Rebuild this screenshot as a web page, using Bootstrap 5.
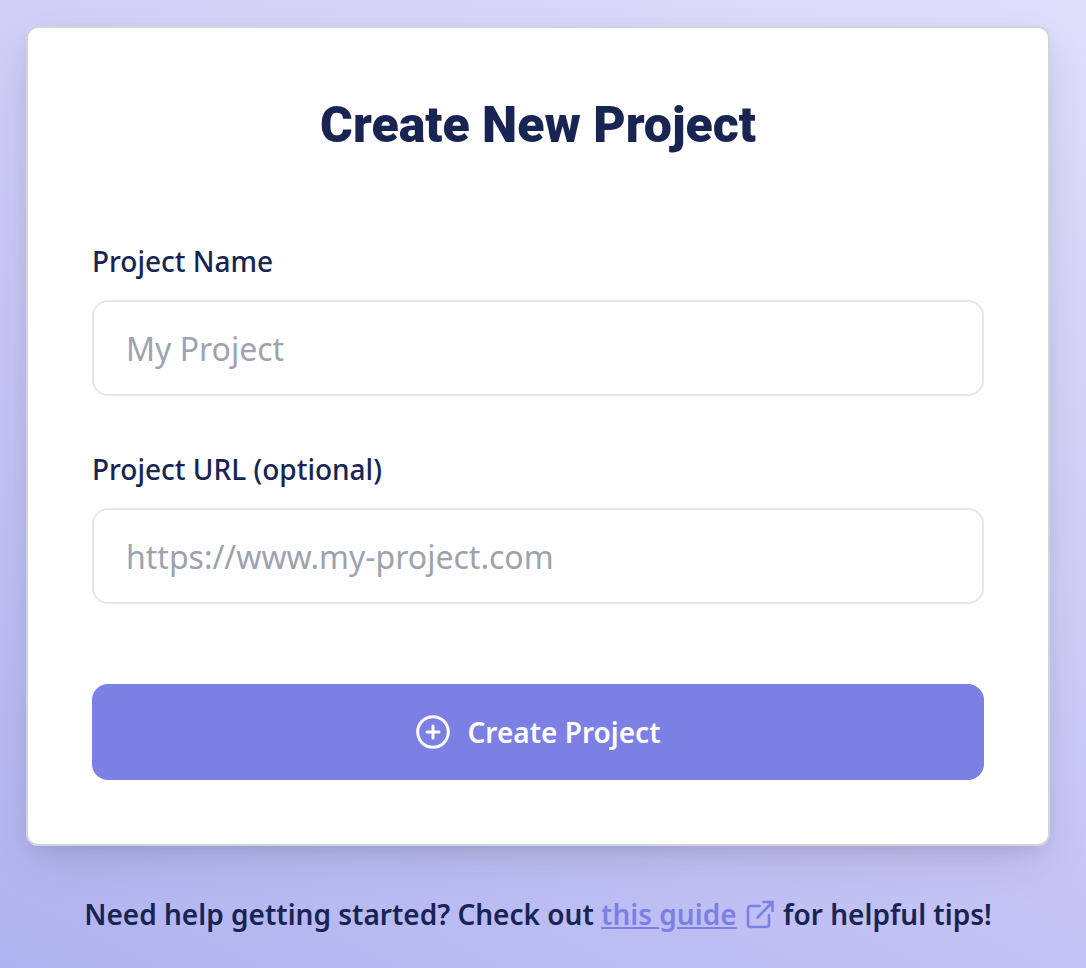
<!DOCTYPE html>
<html lang="en">
<head>
<meta charset="utf-8">
<meta name="viewport" content="width=device-width, initial-scale=1">
<title>Create New Project</title>
<link href="https://cdn.jsdelivr.net/npm/bootstrap@5.3.0/dist/css/bootstrap.min.css" rel="stylesheet">
<style>
body{font-family:"Noto Sans",sans-serif;color:#182452;background:linear-gradient(27deg,#afb3ef 0%,#c4c3f5 37%,#d0d0f7 65%,#dfdefb 100%);padding:26px 36px 0 26px}
.project-card{border:2px solid #d1d5db;border-radius:12px;padding:64px;box-shadow:0 20px 50px -6px rgba(0,0,0,.1),0 8px 20px -6px rgba(0,0,0,.1)}
.project-title{font-family:Roboto,sans-serif;font-size:50px;line-height:66px;font-weight:900;margin-bottom:82px}
.form-label{font-size:28px;line-height:42px;font-weight:500;margin-bottom:18px}
.form-control{height:96px;border:2px solid #e5e7eb;border-radius:16px;padding:0 32px;font-size:32px}
.form-control::placeholder{color:#9ca3af}
.field-group{margin-bottom:52px}
.btn-create{height:96px;border-radius:16px;background:#7c80e4;color:#fff;font-size:28px;font-weight:600;gap:16px;margin-top:80px}
.btn-create:hover{background:#6c70d8;color:#fff}
.help-text{font-size:28px;line-height:40px;font-weight:600;margin-top:48px}
.help-text a,.help-text svg{color:#7c80e4}
.help-text svg{vertical-align:-6px}
</style>
</head>
<body class="min-vh-100">
<main>
<form class="project-card bg-white">
<h1 class="project-title text-center">Create New Project</h1>
<div class="field-group"><label class="form-label d-block" for="name">Project Name</label><input class="form-control" id="name" type="text" placeholder="My Project"></div>
<div><label class="form-label d-block" for="url">Project URL (optional)</label><input class="form-control" id="url" type="url" placeholder="https://www.my-project.com"></div>
<button class="btn btn-create w-100 d-flex align-items-center justify-content-center" type="button">
<svg width="36" height="36" viewBox="0 0 36 36" fill="none" stroke="currentColor" stroke-width="3" stroke-linecap="round" aria-hidden="true"><circle cx="18" cy="18" r="15.3"/><path d="M18 12v12M12 18h12"/></svg>
Create Project</button>
</form>
<p class="help-text text-center mb-0">Need help getting started? Check out <a href="#guide">this guide</a> <svg width="32" height="32" viewBox="0 0 32 32" fill="none" stroke="currentColor" stroke-width="2.6" stroke-linecap="round" stroke-linejoin="round" aria-hidden="true"><path d="M15.500 7H6.500a2.500 2.500 0 0 0-2.500 2.500v16a2.500 2.500 0 0 0 2.500 2.500h16a2.500 2.500 0 0 0 2.500-2.500V16M13.500 18.500 28.500 3M19.500 3H28.500V12"/></svg> for helpful tips!</p>
</main>
<script src="https://cdn.jsdelivr.net/npm/bootstrap@5.3.0/dist/js/bootstrap.bundle.min.js"></script>
</body>
</html>
